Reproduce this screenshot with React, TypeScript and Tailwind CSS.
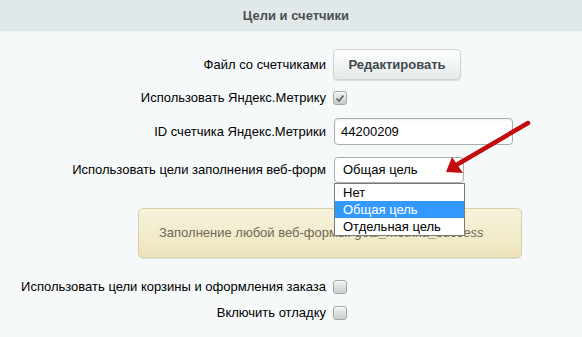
import React from "react";

function Box({ checked }: { checked?: boolean }) {
  return (
    <span className="flex h-[14px] w-[14px] items-center justify-center rounded-[3px] border border-[#a3a8a8] bg-gradient-to-b from-[#f3f4f4] to-[#c9cccc] shadow-[inset_0_1px_1px_rgba(255,255,255,0.8)]">
      {checked && (
        <svg width="10" height="9" viewBox="0 0 10 9">
          <path d="M1.5 4.5 L4 7 L8.5 1.5" fill="none" stroke="#5b6163" strokeWidth="1.6" />
        </svg>
      )}
    </span>
  );
}

function Row({ label, className, children }: { label: string; className: string; children: React.ReactNode }) {
  return (
    <div className={`flex items-center ${className}`}>
      <div className="w-[326px] shrink-0 text-right text-[13px] text-[#000]">{label}</div>
      <div className="relative ml-[7px] flex flex-1 items-center">{children}</div>
    </div>
  );
}

export default function App() {
  return (
    <div
      className="relative h-[337px] w-[582px] overflow-hidden bg-[#f5f9f9]"
      style={{ fontFamily: '"Liberation Sans", Arial, sans-serif' }}
    >
      <div className="flex h-[32px] items-center justify-center border-b border-[#eef3f3] bg-[#e0e8e9] pl-[10px] text-[13px] font-bold text-[#4b5052]">
        Цели и счетчики
      </div>

      <div className="pt-[17px]">
        <Row label="Файл со счетчиками" className="h-[31px]">
          <button className="h-[31px] w-[128px] rounded-[4px] border border-[#cfd5d6] bg-gradient-to-b from-[#ffffff] to-[#e4e9ea] text-[13px] font-bold text-[#3f4a4e] shadow-[0_1px_1px_rgba(0,0,0,0.12)]">
            Редактировать
          </button>
        </Row>

        <Row label="Использовать Яндекс.Метрику" className="mt-[8px] h-[20px]">
          <Box checked />
        </Row>

        <Row label="ID счетчика Яндекс.Метрики" className="mt-[10px] h-[27px]">
          <div className="ml-px flex h-[27px] w-[179px] items-center rounded-[4px] border border-[#a9afb0] bg-white pl-[6px] text-[13px] text-[#000] shadow-[inset_0_1px_2px_rgba(0,0,0,0.08)]">
            44200209
          </div>
        </Row>

        <Row label="Использовать цели заполнения веб-форм" className="mt-[12px] h-[26px]">
          <div className="ml-px flex h-[26px] w-[130px] items-center rounded-[4px] border border-[#a9afb0] bg-white pl-[8px] text-[13px] text-[#000]">
            Общая цель
          </div>
          <div className="absolute left-px top-[26px] z-10 w-[131px] border border-[#7a7a7a] bg-white text-[13px] leading-[17px] text-[#000]">
            <div className="pl-[8px]">Нет</div>
            <div className="bg-[#3399ff] pl-[8px] text-white">Общая цель</div>
            <div className="pl-[8px]">Отдельная цель</div>
          </div>
        </Row>

        <div className="ml-[138px] mt-[25px] flex h-[50px] w-[384px] items-center rounded-[5px] border border-[#d9d0a8] bg-gradient-to-b from-[#f8f3dc] to-[#ede4bd] pl-[20px] text-[13px] text-[#6d6a58] shadow-[0_1px_1px_rgba(0,0,0,0.1)]">
          Заполнение любой веб-формы: <i className="ml-[4px]">goal_metrika_success</i>
        </div>

        <Row label="Использовать цели корзины и оформления заказа" className="mt-[19px] h-[20px]">
          <Box />
        </Row>

        <Row label="Включить отладку" className="mt-[6px] h-[20px]">
          <Box />
        </Row>
      </div>

      <svg className="pointer-events-none absolute left-0 top-0" width="582" height="337">
        <line x1="528" y1="123" x2="458" y2="164" stroke="#c20b0b" strokeWidth="4.5" strokeLinecap="round" />
        <polygon points="446,172 452,157 463,173" fill="#c20b0b" />
      </svg>
    </div>
  );
}
